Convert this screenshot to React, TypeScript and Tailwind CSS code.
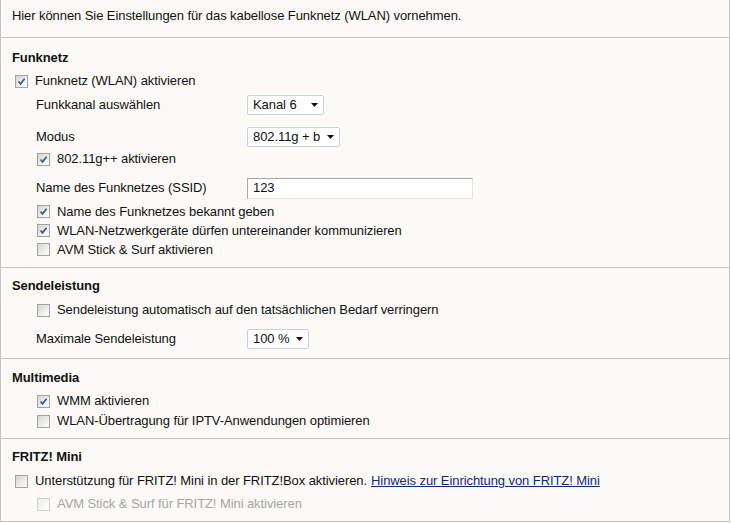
import type { ReactNode } from "react"

function Box({ checked = false, disabled = false }: { checked?: boolean; disabled?: boolean }) {
  return (
    <span
      className={
        "relative inline-block h-[13px] w-[13px] shrink-0 border " +
        (disabled
          ? "border-[#cfcfcf] bg-linear-to-br from-[#ececea] to-[#ffffff]"
          : "border-[#a3a3a3] bg-linear-to-br from-[#d6d6d0] to-[#ffffff]")
      }
    >
      {checked && (
        <svg viewBox="0 0 11 11" className="absolute left-0 top-0 h-[11px] w-[11px]">
          <path d="M2.5 5.5 L4.5 7.8 L8.6 2.8" fill="none" stroke="#3f5f91" strokeWidth="1.8" />
        </svg>
      )}
    </span>
  )
}

function Check({
  label,
  checked,
  indent,
  disabled,
  h = 19,
  children,
}: {
  label: string
  checked?: boolean
  indent?: boolean
  disabled?: boolean
  h?: number
  children?: ReactNode
}) {
  return (
    <div
      className={
        "flex items-center gap-[7px] " +
        (indent ? "pl-[36px] " : "pl-[14px] ") +
        (h === 24 ? "h-[24px]" : h === 20 ? "h-[20px]" : "h-[19px]")
      }
    >
      <Box checked={checked} disabled={disabled} />
      <span className={disabled ? "text-[#a6a6a6]" : ""}>{label}</span>
      {children}
    </div>
  )
}

function Select({ value, w }: { value: string; w: string }) {
  return (
    <div
      className={
        "flex h-[20px] items-center justify-between rounded-[2px] border border-[#c9d0dc] bg-white pl-[5px] pr-[5px] " +
        w
      }
    >
      <span>{value}</span>
      <svg viewBox="0 0 7 4" className="h-[4px] w-[7px] shrink-0">
        <path d="M0 0 H7 L3.5 4 Z" fill="#111" />
      </svg>
    </div>
  )
}

function Field({ label, children, className }: { label: string; children: ReactNode; className: string }) {
  return (
    <div className={"flex items-center pl-[35px] " + className}>
      <span className="w-[211px]">{label}</span>
      {children}
    </div>
  )
}

function Heading({ children }: { children: ReactNode }) {
  return <h2 className="flex h-[20px] items-center pl-[11px] font-bold">{children}</h2>
}

export default function App() {
  return (
    <div className="min-h-[523px] bg-[#fbfaf6] font-['Liberation_Sans',Arial,sans-serif] text-[13px] leading-[16px] tracking-[-0.08px] text-[#111]">
      <div className="w-[730px] border-x border-[#c4c4c0]">
        <p className="h-[38px] border-b border-[#c6c6c2] pl-[11px] pt-[8px]">
          Hier können Sie Einstellungen für das kabellose Funknetz (WLAN) vornehmen.
        </p>

        <section className="border-b border-[#c6c6c2] pb-[8px] pt-[10px]">
          <Heading>Funknetz</Heading>
          <div className="mt-[3px]">
            <Check label="Funknetz (WLAN) aktivieren" checked h={20} />
          </div>
          <Field label="Funkkanal auswählen" className="mt-[2px] h-[24px]">
            <Select value="Kanal 6" w="w-[77px]" />
          </Field>
          <Field label="Modus" className="mt-[8px] h-[24px]">
            <Select value="802.11g + b" w="w-[93px]" />
          </Field>
          <Check label="802.11g++ aktivieren" checked indent h={20} />
          <Field label="Name des Funknetzes (SSID)" className="mt-[7px] h-[24px]">
            <div className="flex h-[21px] w-[226px] items-center border border-[#a8a8a8] border-b-[#dfe3ea] border-r-[#dfe3ea] bg-white pl-[5px]">
              123
            </div>
          </Field>
          <div className="mt-[2px]">
            <Check label="Name des Funknetzes bekannt geben" checked indent />
            <Check label="WLAN-Netzwerkgeräte dürfen untereinander kommunizieren" checked indent />
            <Check label="AVM Stick & Surf aktivieren" indent />
          </div>
        </section>

        <section className="border-b border-[#c6c6c2] pb-[7px] pt-[8px]">
          <Heading>Sendeleistung</Heading>
          <div className="mt-[4px]">
            <Check label="Sendeleistung automatisch auf den tatsächlichen Bedarf verringern" indent h={20} />
          </div>
          <Field label="Maximale Sendeleistung" className="mt-[7px] h-[24px]">
            <Select value="100 %" w="w-[62px]" />
          </Field>
        </section>

        <section className="border-b border-[#c6c6c2] pb-[7px] pt-[9px]">
          <Heading>Multimedia</Heading>
          <div className="mt-[3px]">
            <Check label="WMM aktivieren" checked indent h={20} />
            <Check label="WLAN-Übertragung für IPTV-Anwendungen optimieren" indent h={20} />
          </div>
        </section>

        <section className="border-b border-[#c6c6c2] pb-[7px] pt-[8px]">
          <Heading>FRITZ! Mini</Heading>
          <div className="mt-[4px]">
            <Check label="Unterstützung für FRITZ! Mini in der FRITZ!Box aktivieren." h={20}>
              <a href="#" className="ml-[-3px] text-[#0b2c7c] underline">
                Hinweis zur Einrichtung von FRITZ! Mini
              </a>
            </Check>
          </div>
          <div className="mt-[3px]">
            <Check label="AVM Stick & Surf für FRITZ! Mini aktivieren" indent disabled h={20} />
          </div>
        </section>
      </div>
    </div>
  )
}
